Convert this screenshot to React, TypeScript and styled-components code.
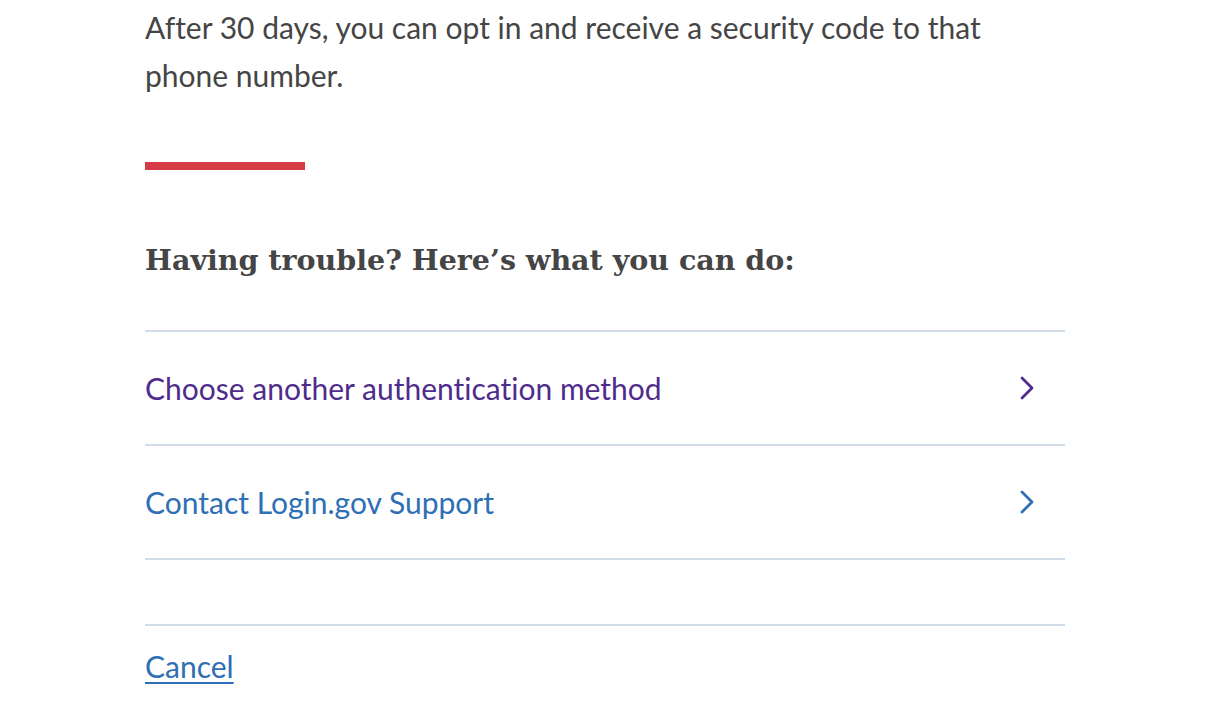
import React from "react";
import styled, { createGlobalStyle } from "styled-components";

const Global = createGlobalStyle`
  html, body { margin: 0; padding: 0; background: #fff; }
  body {
    font-family: Lato, "Open Sans", sans-serif;
    color: #454545;
    font-variant-ligatures: none;
  }
`;

const Page = styled.main`
  width: 920px;
  margin: 0 0 0 145px;
  padding-top: 3px;
`;

const Lead = styled.p`
  margin: 0;
  font-size: 30px;
  line-height: 48px;
  color: #454545;
`;

const Accent = styled.div`
  width: 160px;
  height: 8px;
  background: #d83a46;
  margin-top: 63px;
`;

const Heading = styled.h2`
  margin: 70px 0 0;
  font-family: "DejaVu Serif", serif;
  font-weight: bold;
  font-size: 28.5px;
  line-height: 40px;
  color: #454545;
`;

const List = styled.ul`
  list-style: none;
  margin: 50px 0 0;
  padding: 0;
  border-top: 2px solid #d1dce9;
`;

const Item = styled.li`
  border-bottom: 2px solid #d1dce9;
`;

const RowLink = styled.a<{ $visited?: boolean }>`
  display: flex;
  align-items: center;
  justify-content: space-between;
  height: 112px;
  padding-right: 30px;
  font-size: 30px;
  text-decoration: none;
  color: ${(p) => (p.$visited ? "#4f2c8c" : "#2e6fb5")};
`;

const Footer = styled.div`
  margin-top: 64px;
  border-top: 2px solid #d1dce9;
  padding-top: 22px;
`;

const CancelLink = styled.a`
  font-size: 30px;
  color: #2e6fb5;
  text-decoration: underline;
  text-decoration-thickness: 3px;
  text-underline-offset: 4px;
`;

const Chevron = () => (
  <svg width="16" height="26" viewBox="0 0 16 26" fill="none">
    <path d="M3 3 L13 13 L3 23" stroke="currentColor" strokeWidth="2.8" strokeLinecap="round" strokeLinejoin="round" />
  </svg>
);

export default function App() {
  return (
    <>
      <Global />
      <Page>
        <Lead>After 30 days, you can opt in and receive a security code to that phone number.</Lead>
        <Accent />
        <Heading>Having trouble? Here’s what you can do:</Heading>
        <List>
          <Item>
            <RowLink href="#" $visited>
              <span>Choose another authentication method</span>
              <Chevron />
            </RowLink>
          </Item>
          <Item>
            <RowLink href="#">
              <span>Contact Login.gov Support</span>
              <Chevron />
            </RowLink>
          </Item>
        </List>
        <Footer>
          <CancelLink href="#">Cancel</CancelLink>
        </Footer>
      </Page>
    </>
  );
}
